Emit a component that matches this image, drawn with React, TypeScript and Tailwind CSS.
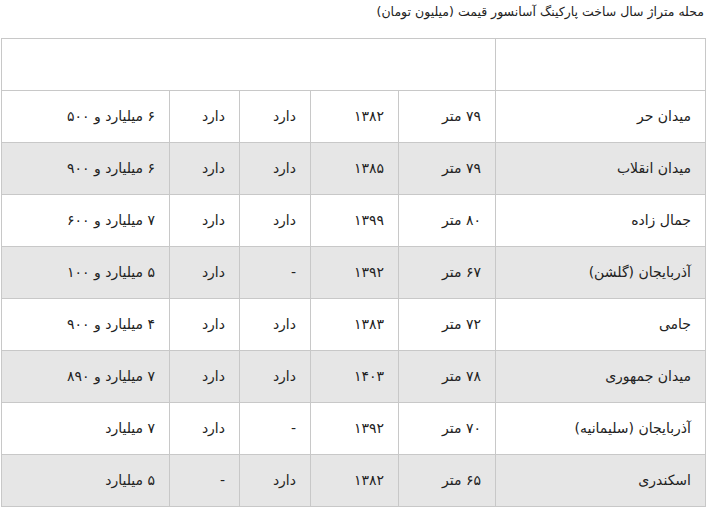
import React from "react";

const rows: string[][] = [
  ["میدان حر", "۷۹ متر", "۱۳۸۲", "دارد", "دارد", "۶ میلیارد و ۵۰۰"],
  ["میدان انقلاب", "۷۹ متر", "۱۳۸۵", "دارد", "دارد", "۶ میلیارد و ۹۰۰"],
  ["جمال زاده", "۸۰ متر", "۱۳۹۹", "دارد", "دارد", "۷ میلیارد و ۶۰۰"],
  ["آذربایجان (گلشن)", "۶۷ متر", "۱۳۹۲", "-", "دارد", "۵ میلیارد و ۱۰۰"],
  ["جامی", "۷۲ متر", "۱۳۸۳", "دارد", "دارد", "۴ میلیارد و ۹۰۰"],
  ["میدان جمهوری", "۷۸ متر", "۱۴۰۳", "دارد", "دارد", "۷ میلیارد و ۸۹۰"],
  ["آذربایجان (سلیمانیه)", "۷۰ متر", "۱۳۹۲", "-", "دارد", "۷ میلیارد"],
  ["اسکندری", "۶۵ متر", "۱۳۸۲", "دارد", "-", "۵ میلیارد"],
];

export default function App() {
  return (
    <div
      dir="rtl"
      className="w-[709px] h-[508px] bg-white text-[#222] pl-[2px] pr-[3px] overflow-hidden"
      style={{ fontFamily: '"DejaVu Sans", sans-serif' }}
    >
      <div className="h-[38px] pt-[3px] pr-[2px] text-[12.5px] leading-[18px]">
        محله متراژ سال ساخت پارکینگ آسانسور قیمت (میلیون تومان)
      </div>
      <table className="w-[704px] table-fixed border-collapse text-[14px]">
        <colgroup>
          <col className="w-[210px]" />
          <col className="w-[97px]" />
          <col className="w-[88px]" />
          <col className="w-[71px]" />
          <col className="w-[70px]" />
          <col className="w-[168px]" />
        </colgroup>
        <tbody>
          <tr className="h-[52px]">
            <td className="border border-[#c8c8c8]"></td>
            <td colSpan={5} className="border border-[#c8c8c8]"></td>
          </tr>
          {rows.map((r, i) => (
            <tr key={i} className={`h-[52px] ${i % 2 === 1 ? "bg-[#e6e6e6]" : "bg-white"}`}>
              {r.map((c, j) => (
                <td key={j} className="border border-[#c8c8c8] pr-[14px] text-right align-middle whitespace-nowrap">
                  {c}
                </td>
              ))}
            </tr>
          ))}
        </tbody>
      </table>
    </div>
  );
}
